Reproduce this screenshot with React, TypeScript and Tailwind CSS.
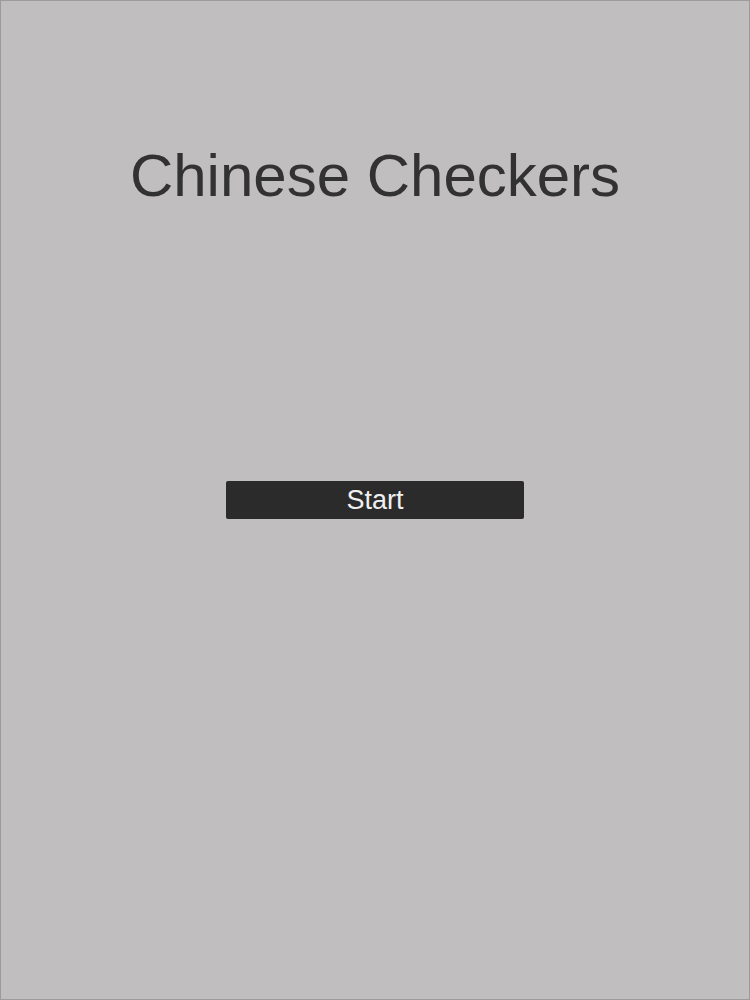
import React from 'react';

const App: React.FC = () => {
    return (
        <div
            className="h-screen w-full border border-[#9c9b9c] bg-[#c0bebf] flex flex-col items-center"
            style={{ fontFamily: '"Liberation Sans", Arial, sans-serif' }}
        >
            <h1 className="mt-[145px] text-[60px] leading-none text-[#333233]">Chinese Checkers</h1>
            <button className="mt-[275px] w-[298px] h-[38px] rounded-[2px] bg-[#2c2b2c] text-[#f0f0f0] text-[27px] leading-none">
                Start
            </button>
        </div>
    );
};

export default App;
